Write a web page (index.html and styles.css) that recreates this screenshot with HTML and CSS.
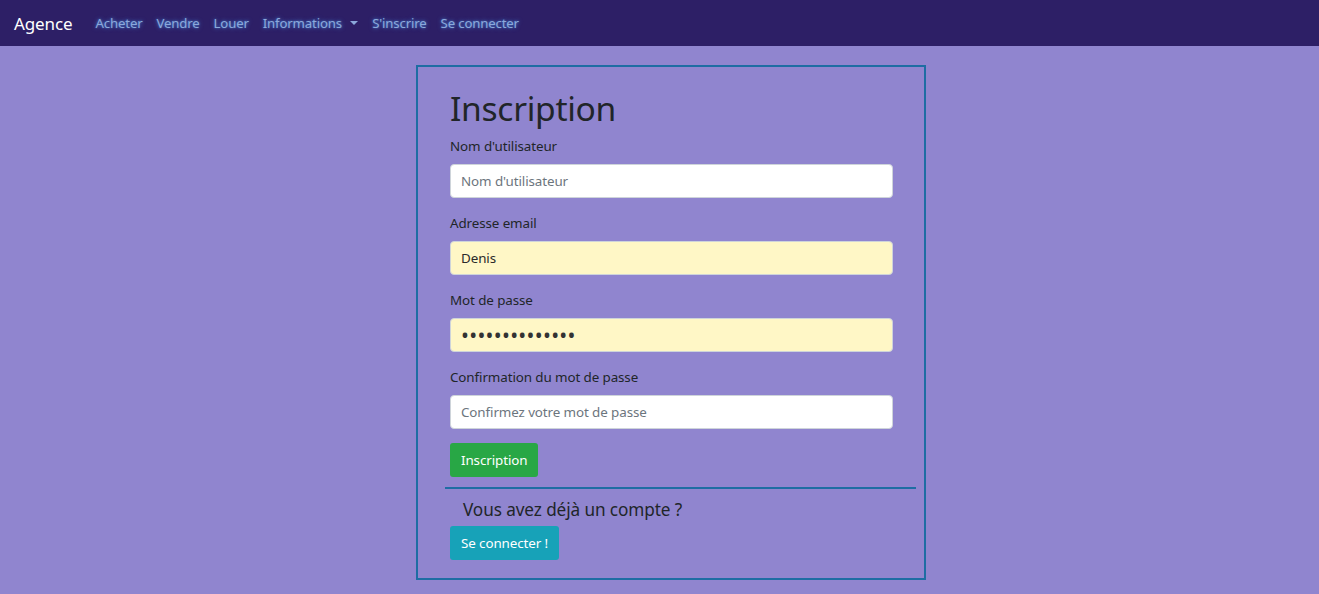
FILE: index.html
```
<!DOCTYPE html>
<html lang="fr">
<head>
<meta charset="utf-8">
<title>Inscription</title>
<link rel="stylesheet" href="styles.css">
</head>
<body>
<nav class="navbar">
  <a class="brand" href="#">Agence</a>
  <ul class="nav">
    <li><a href="#">Acheter</a></li>
    <li><a href="#">Vendre</a></li>
    <li><a href="#">Louer</a></li>
    <li><a href="#" class="dropdown">Informations <span class="caret"></span></a></li>
    <li><a href="#">S'inscrire</a></li>
    <li><a href="#">Se connecter</a></li>
  </ul>
</nav>
<main class="page">
  <section class="card">
    <h1 class="title">Inscription</h1>
    <form class="form">
      <div class="group">
        <label class="label">Nom d'utilisateur</label>
        <input class="control" type="text" placeholder="Nom d'utilisateur">
      </div>
      <div class="group">
        <label class="label">Adresse email</label>
        <input class="control filled" type="text" value="Denis">
      </div>
      <div class="group">
        <label class="label">Mot de passe</label>
        <input class="control filled pw" type="password" value="abcdefghijklmn">
      </div>
      <div class="group last">
        <label class="label">Confirmation du mot de passe</label>
        <input class="control" type="password" placeholder="Confirmez votre mot de passe">
      </div>
      <button class="btn btn-green" type="button">Inscription</button>
    </form>
    <hr class="sep">
    <h4 class="sub">Vous avez déjà un compte ?</h4>
    <button class="btn btn-cyan" type="button">Se connecter !</button>
  </section>
</main>
</body>
</html>
```
FILE: styles.css
```
* { box-sizing: border-box; }
html, body { margin: 0; padding: 0; }
body {
  background: #9085cf;
  font-family: "Noto Sans", "Open Sans", sans-serif;
  font-size: 14px;
  color: #212529;
  height: 594px;
  overflow: hidden;
}
.navbar {
  height: 46px;
  background: #2d1f66;
  display: flex;
  align-items: center;
  padding: 0 14px;
}
.brand {
  color: #fff;
  text-decoration: none;
  font-size: 17px;
  margin-right: 16px;
  letter-spacing: -0.1px;
}
.nav {
  display: flex;
  list-style: none;
  margin: 0;
  padding: 0;
}
.nav a {
  display: block;
  padding: 0 7px;
  color: #8ba8db;
  text-decoration: none;
  font-size: 13.2px;
  text-shadow: 0 0 4px #4a78c8, 0 0 2px #3b64b0;
  letter-spacing: -0.15px;
}
.caret {
  display: inline-block;
  width: 0; height: 0;
  border-left: 4px solid transparent;
  border-right: 4px solid transparent;
  border-top: 4px solid #8ba8db;
  vertical-align: 3px;
  margin-left: 5px;
}
.page {
  display: flex;
  justify-content: center;
  padding: 19px 0 0 23px;
}
.card {
  width: 510px;
  height: 515px;
  border: 2px solid #1e6da3;
  padding: 20px 31px 0 32px;
}
.title {
  margin: 0 0 7px;
  font-weight: 400;
  font-size: 33.6px;
  line-height: 42px;
  letter-spacing: -0.3px;
}
.group { margin-bottom: 15px; }
.group.last { margin-bottom: 14px; }
.label {
  display: block;
  margin-bottom: 7px;
  line-height: 21px;
  font-size: 13.4px;
  letter-spacing: -0.1px;
}
.control {
  display: block;
  width: 100%;
  height: 34px;
  padding: 0 10px;
  border: 1px solid #ced4da;
  border-radius: 4px;
  background: #fff;
  font-family: inherit;
  font-size: 13.4px;
  color: #495057;
  letter-spacing: -0.1px;
}
.control::placeholder { color: #6c757d; }
.filled { background: #fff7c6; color: #2a2a2a; }
.pw { font-size: 21px; letter-spacing: 0.3px; color: #333; }
.btn {
  display: inline-block;
  height: 34px;
  padding: 0 11px;
  border: 0;
  border-radius: 3px;
  color: #fff;
  font-family: inherit;
  font-size: 13.4px;
  letter-spacing: -0.1px;
  white-space: nowrap;
}
.btn-green { background: #28a745; }
.btn-cyan { background: #17a2b8; }
.sep {
  margin: 10px -23px 0 -5px;
  border: 0;
  border-top: 2px solid #1e6da3;
}
.sub {
  margin: 10px 0 6px 13px;
  font-weight: 400;
  font-size: 17.2px;
  line-height: 21px;
  letter-spacing: -0.1px;
}
```
